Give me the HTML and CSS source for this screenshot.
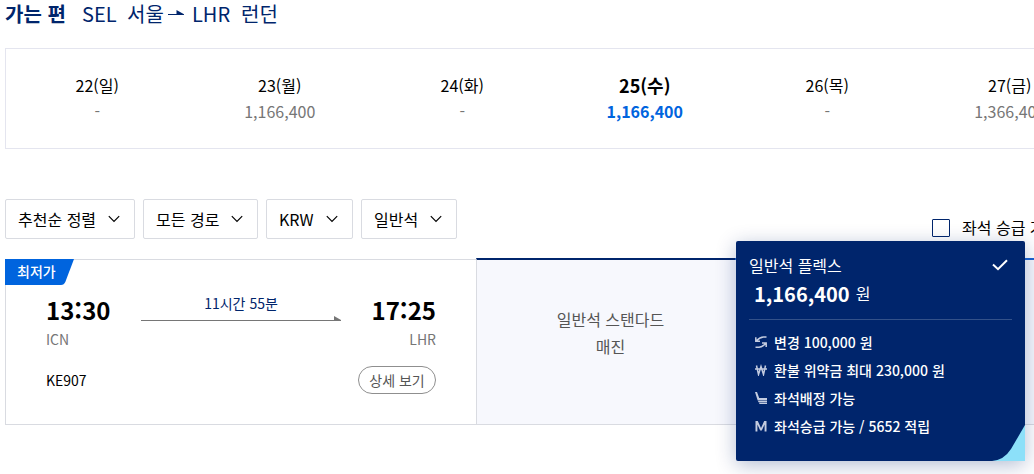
FILE: index.html
```html
<!DOCTYPE html>
<html lang="ko">
<head>
	<meta charset="UTF-8">
	<title>항공편 선택</title>
	<link rel="stylesheet" href="styles.css">
</head>
<body>
	<h1 class="route">
		<strong>가는 편</strong>
		<span class="from">SEL</span>
		<span class="city">서울</span>
		<svg class="route-arrow" width="16" height="6" viewBox="0 0 16 6"><path d="M0 4h8.500V0l7.500 4.300V5H0z" fill="#00256c"/></svg>
		<span class="to">LHR</span>
		<span class="city">런던</span>
	</h1>

	<div class="dates">
		<div class="date"><span class="day">22(일)</span><span class="fare">-</span></div>
		<div class="date"><span class="day">23(월)</span><span class="fare">1,166,400</span></div>
		<div class="date"><span class="day">24(화)</span><span class="fare">-</span></div>
		<div class="date on"><span class="day">25(수)</span><span class="fare">1,166,400</span></div>
		<div class="date"><span class="day">26(목)</span><span class="fare">-</span></div>
		<div class="date"><span class="day">27(금)</span><span class="fare">1,366,400</span></div>
	</div>

	<div class="tools">
		<div class="filters">
			<button class="filter w1">추천순 정렬 <svg width="12" height="8" viewBox="0 0 12 8"><path d="M.8 1.200L6 6.400l5.200-5.200"/></svg></button>
			<button class="filter w2">모든 경로 <svg width="12" height="8" viewBox="0 0 12 8"><path d="M.8 1.200L6 6.400l5.200-5.200"/></svg></button>
			<button class="filter w3">KRW <svg width="12" height="8" viewBox="0 0 12 8"><path d="M.8 1.200L6 6.400l5.200-5.200"/></svg></button>
			<button class="filter w4">일반석 <svg width="12" height="8" viewBox="0 0 12 8"><path d="M.8 1.200L6 6.400l5.200-5.200"/></svg></button>
		</div>
		<label class="upgrade"><span class="box"></span>좌석 승급 가능</label>
	</div>

	<div class="flight">
		<div class="info">
			<div class="badge">
				<svg class="badge-bg" width="69" height="26" viewBox="0 0 69 26"><path d="M0 0h69l-8.500 22.500Q59 26 56 26H0z" fill="#0064de"/></svg>
				<span class="badge-text">최저가</span>
			</div>
			<div class="times">
				<div class="port"><b>13:30</b><span>ICN</span></div>
				<div class="path">
					<span>11시간 55분</span>
					<svg width="200" height="5" viewBox="0 0 200 5"><path d="M0 4h193V0l7 4v1H0z" fill="#767676"/></svg>
				</div>
				<div class="port arrive"><b>17:25</b><span>LHR</span></div>
			</div>
			<div class="detail">
				<span>KE907</span>
				<button class="more">상세 보기</button>
			</div>
		</div>
		<div class="seat standard"><p>일반석 스탠다드</p><p>매진</p></div>
		<div class="seat flex">
			<div class="card">
				<div class="card-head">
					<span>일반석 플렉스</span>
					<svg width="16" height="12" viewBox="0 0 16 12"><path d="M1 5.500L6 10.200L15 1.200" fill="none" stroke="#fff" stroke-width="2"/></svg>
				</div>
				<div class="price"><b>1,166,400</b> <span>원</span></div>
				<ul class="rules">
					<li>
						<svg width="12" height="12" viewBox="0 0 12 12"><path d="M11.500 1H8.500Q5 1 1.500 4.800M.8 1.200v4H5M.5 11.200H4Q7.500 11 10.500 7.500M11.200 11V6.900H7"/></svg>
						변경 100,000 원
					</li>
					<li>
						<svg width="12" height="12" viewBox="0 0 12 12"><path d="M1.500 1.500l2 9L6 2.500l2.500 8 2-9M0 5h12"/></svg>
						환불 위약금 최대 230,000 원
					</li>
					<li>
						<svg width="12" height="12" viewBox="0 0 12 12"><path class="thick" d="M0 0h2l2.200 6H12v2.500H2.700zM3 9h9v1.200H3.500zM4 10.800h8V12H4.500z"/></svg>
						좌석배정 가능
					</li>
					<li>
						<svg width="12" height="12" viewBox="0 0 12 12"><path class="thick" d="M.5 1h2.300L6 8l3.200-7h2.300v10.500H9.600V4.600L6.800 10.500H5.200L2.400 4.600v6.900H.5z"/></svg>
						좌석승급 가능 / 5652 적립
					</li>
				</ul>
				<svg class="corner" width="33" height="36" viewBox="0 0 33 36"><path d="M33 0v36H0Q12 35 19 24z" fill="#8ce0f9"/></svg>
			</div>
		</div>
	</div>
</body>
</html>
```
FILE: styles.css
```css
* { box-sizing: border-box; }
body { margin: 0; height: 474px; padding-left: 5px; overflow: hidden; background: #fff; color: #000;
	font: 16px/24px "Noto Sans CJK KR", sans-serif; }
p, ul, h1 { margin: 0; padding: 0; }
button { font-family: inherit; color: #000; background: #fff; }

.route { display: flex; height: 48px; font-size: 20px; line-height: 28px; font-weight: 400; color: #00256c; white-space: nowrap; }
.route strong { width: 77px; font-weight: 700; }
.from { width: 45px; }
.city { width: 37px; }
.route-arrow { margin: 10px 8px 0 4px; }
.to { width: 49px; }

.dates { display: flex; width: 1029px; height: 101px; padding-top: 23px; border: 1px solid #e4e5ef; border-right: 0; overflow: hidden; }
.date { flex: 0 0 182.5px; display: flex; flex-direction: column; text-align: center; line-height: 26px; }
.fare { color: #767676; }
.on .day { font-size: 18px; font-weight: 700; }
.on .fare { color: #0064de; font-weight: 700; }

.tools { display: flex; justify-content: space-between; height: 109px; padding-top: 50px; }
.filters { display: flex; gap: 8px; }
.filter { display: flex; align-items: center; justify-content: space-between; height: 40px; padding: 0 14px 0 12px;
	border: 1px solid #d9dbe1; border-radius: 2px; font-size: 16px; line-height: 24px; }
.filter svg { fill: none; stroke: #000; stroke-width: 1.2; }
.w1 { width: 130px; }
.w2 { width: 115px; }
.w3 { width: 87px; }
.w4 { width: 96px; }
.upgrade { display: flex; gap: 12px; width: 102px; height: 24px; margin-top: 16px; overflow: hidden; white-space: nowrap; }
.box { flex: none; width: 18px; height: 18px; margin-top: 4px; border: 1px solid #00256c; border-radius: 1px; }

.flight { display: flex; height: 167px; }
.info { flex: none; width: 472px; height: 166px; margin-top: 1px; border: 1px solid #d9dbe1; }
.badge { display: grid; width: 69px; height: 26px; margin: -1px 0 0 -1px; }
.badge-bg, .badge-text { grid-area: 1 / 1; }
.badge-text { padding-left: 12px; color: #fff; font-size: 14px; line-height: 24px; font-weight: 500; }
.times { display: flex; padding: 8px 40px 0; }
.port { display: flex; flex-direction: column; width: 95px; }
.port b { font-size: 24px; line-height: 34px; }
.port span { color: #767676; font-size: 14px; line-height: 24px; }
.path { width: 200px; color: #00256c; font-size: 14px; line-height: 20px; text-align: center; }
.path span, .path svg { display: block; }
.path svg { margin-top: 3px; }
.arrive { align-items: flex-end; }
.detail { display: flex; justify-content: space-between; align-items: center; height: 28px; margin-top: 15px; padding: 0 40px; font-size: 14px; }
.more { width: 78px; height: 28px; padding: 0; border: 1px solid #8f8f8f; border-radius: 14px; color: #555; font-size: 14px; line-height: 24px; }
.seat { height: 167px; border-top: 2px solid #00256c; border-bottom: 1px solid #d9dbe1; background: #f7f8fd; }
.standard { flex: none; width: 259px; margin-left: -1px; padding-top: 46px; border-left: 1px solid #d9dbe1; color: #555; line-height: 27px; text-align: center; }
.standard p { padding-left: 9px; }
.flex { position: relative; flex: 1; border-top-color: #1b64d1; }

/* selected fare, opens over the row */
.card { position: absolute; left: 1px; top: -19px; width: 289px; height: 220px; padding: 12px 13px 13px; border-radius: 2px;
	background: #00256c; color: #fff; box-shadow: 0 4px 20px rgba(0, 37, 108, .3); }
.card-head { display: flex; justify-content: space-between; align-items: center; height: 24px; padding-right: 4px; }
.price { display: flex; gap: 6px; height: 43px; padding-left: 5px; border-bottom: 1px solid #335189; line-height: 34px; }
.price b { font-size: 20px; }
.price span { line-height: 32px; }
.rules { padding-top: 8px; list-style: none; }
.rules li { display: flex; align-items: center; gap: 7px; height: 28px; padding-left: 6px; font-size: 14px; font-weight: 500; }
.rules svg { fill: none; stroke: #c3cce0; stroke-width: 1.5; }
.rules .thick { fill: #c3cce0; stroke: none; }
.corner { position: absolute; right: 0; bottom: 0; }
```
